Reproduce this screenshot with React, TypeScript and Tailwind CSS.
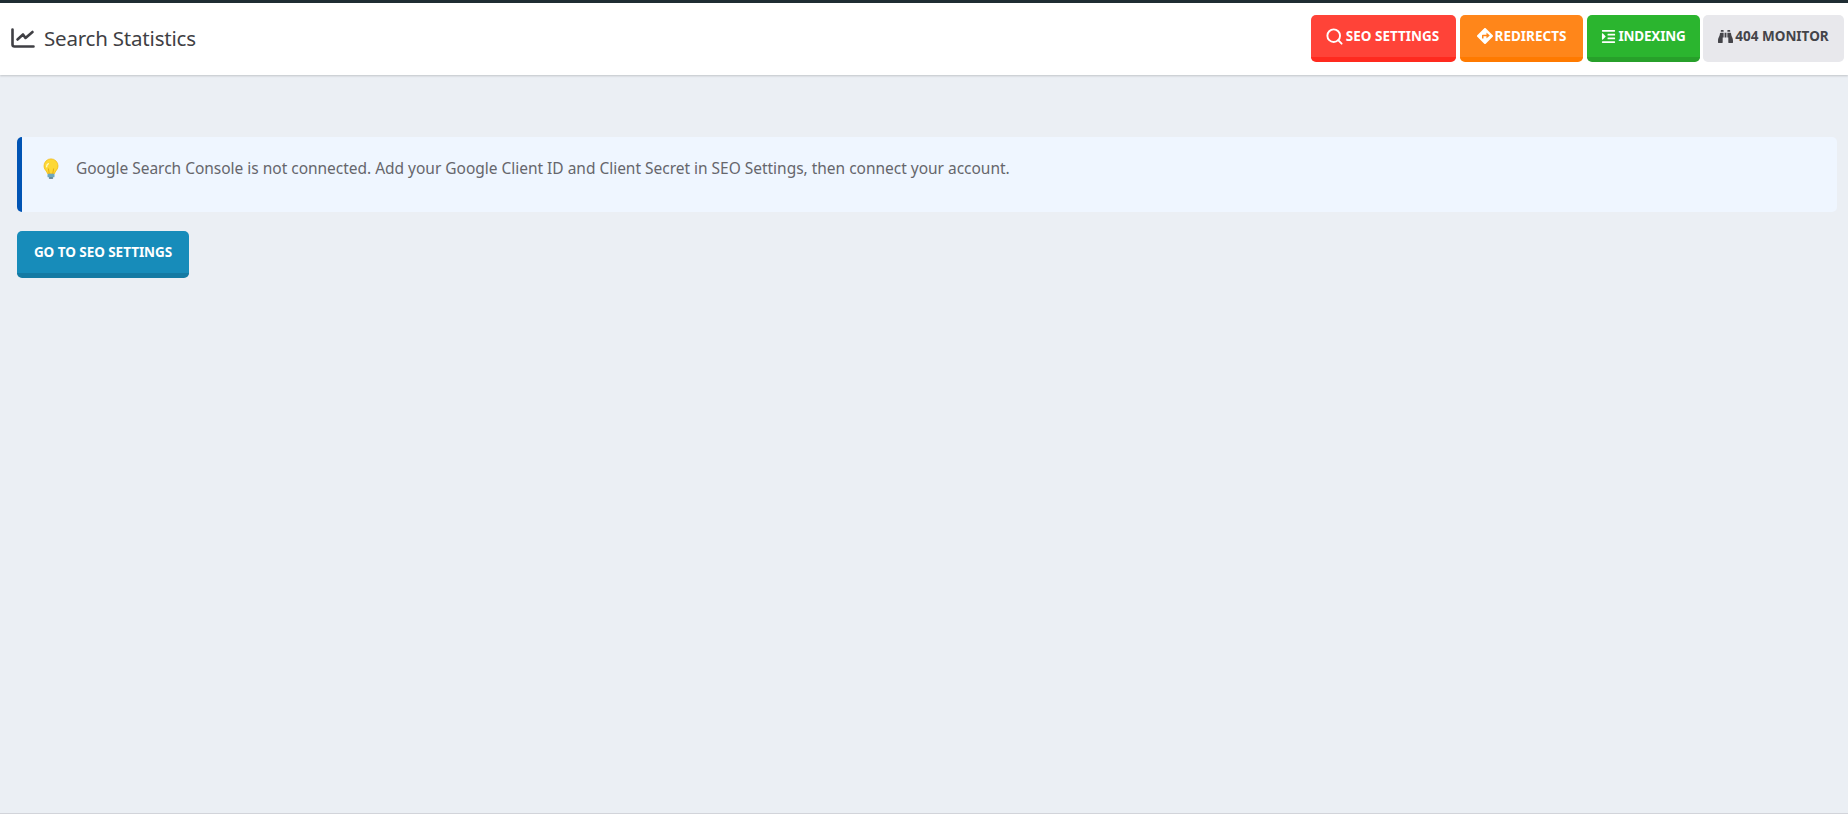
import { FaBinoculars, FaDirections, FaIndent } from "react-icons/fa";
import { Search } from "lucide-react";

const buttons = [
  { label: "SEO SETTINGS", icon: <Search className="h-[19px] w-[19px]" strokeWidth={2.4} />, cls: "mr-[4px] w-[145px] pr-[3px] bg-[#ff4338] border-[#ff2a1f] text-white" },
  { label: "REDIRECTS", icon: <FaDirections className="h-[16px] w-[16px]" />, cls: "mr-[4px] w-[123px] bg-[#ff861a] border-[#ff7a00] text-white" },
  { label: "INDEXING", icon: <FaIndent className="h-[15px] w-[15px]" />, cls: "mr-[3px] w-[113px] tracking-[-0.2px] bg-[#2bb52f] border-[#27a02a] text-white" },
  { label: "404 MONITOR", icon: <FaBinoculars className="h-[15px] w-[15px]" />, cls: "w-[141px] bg-[#e8e8ec] border-[#e8e8ec] text-[#444449]" },
];

function Bulb() {
  return (
    <svg viewBox="0 0 20 24" className="mt-[1px] h-[21px] w-[18px]">
      <path d="M10 1a8 8 0 0 0-8 8c0 3.2 2 5 3.2 7 .5.8.6 1.500.8 2h8c.2-.5.3-1.200.8-2C16 14 18 12.200 18 9a8 8 0 0 0-8-8z" fill="#fdd835" stroke="#f0b400" strokeWidth="0.8" />
      <path d="M7 6.500c-1.500.8-2 2-2 3.500" fill="none" stroke="#fff8c4" strokeWidth="1.500" strokeLinecap="round" />
      <path d="M8 18l-1-6m5 6l1-6" fill="none" stroke="#e09a00" strokeWidth="0.8" />
      <rect x="6" y="18" width="8" height="4" rx="1" fill="#6fa8bd" />
      <rect x="7.500" y="22" width="5" height="1.600" rx="0.800" fill="#456f80" />
    </svg>
  );
}

function ChartIcon() {
  return (
    <svg viewBox="0 0 24 20" className="h-[20px] w-[24px]" fill="none" stroke="currentColor" strokeWidth="2.6" strokeLinecap="round" strokeLinejoin="round">
      <path d="M1.500 1.500v15a2 2 0 0 0 2 2h19" />
      <path d="M6.500 11.500l5.500-5 2.500 3.500 7-6" />
    </svg>
  );
}

export default function App() {
  return (
    <div className="flex min-h-[831px] flex-col bg-white font-['Noto_Sans',sans-serif]">
      <header className="z-10 flex h-[75px] items-center justify-between border-t-[3px] border-[#1f2d33] bg-white pl-[11px] pr-[4px] shadow-[0_1px_2px_rgba(0,0,0,0.18)]">
        <div className="mb-[2px] flex items-center gap-[9px] text-[#3f3f44]">
          <ChartIcon />
          <h1 className="text-[20.5px] font-normal tracking-[-0.2px]">Search Statistics</h1>
        </div>
        <div className="mb-[1px] flex">
          {buttons.map((b) => (
            <button key={b.label} className={"flex h-[47px] items-center justify-center gap-[2px] rounded-[5px] border-b-[5px] text-[13.5px] font-bold " + b.cls}>
              {b.icon}
              {b.label}
            </button>
          ))}
        </div>
      </header>

      <main className="flex-1 bg-[#ebeff4] pl-[17px] pr-[11px] pt-[62px]">
        <div className="flex h-[75px] items-start rounded-[5px] border-l-[5px] border-[#0054b4] bg-[#eff6ff] pl-[20px] pt-[20px]">
          <Bulb />
          <p className="ml-[16px] text-[15.5px] leading-[22px] tracking-[-0.02px] text-[#66666c]">
            Google Search Console is not connected. Add your Google Client ID and Client Secret in SEO Settings, then connect your account.
          </p>
        </div>
        <button className="mt-[19px] h-[47px] w-[172px] rounded-[5px] border-b-[5px] border-[#147aa3] bg-[#178cba] text-[13.5px] font-bold tracking-[-0.05px] text-white">
          GO TO SEO SETTINGS
        </button>
      </main>

      <footer className="h-[18px] border-t border-[#d2d4da] bg-white" />
    </div>
  );
}
